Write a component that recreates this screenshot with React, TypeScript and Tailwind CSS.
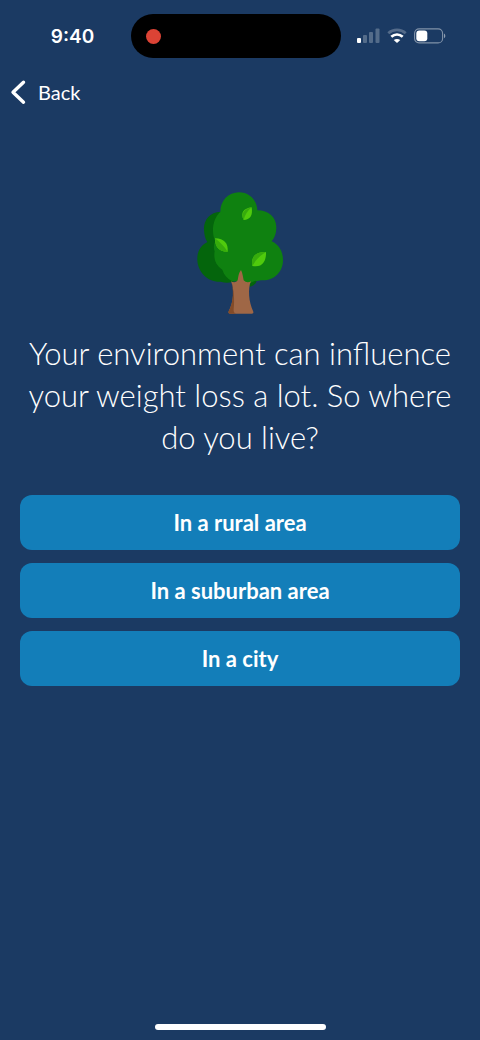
import React from 'react';

const options = ['In a rural area', 'In a suburban area', 'In a city'];

const SignalIcon: React.FC = () => (
  <svg className="w-[23px] h-4" viewBox="0 0 23 16" fill="#fff" aria-hidden="true">
    <rect x="0" y="10" width="4" height="5" rx="1" />
    <g opacity="0.25">
      <rect x="6" y="7" width="4" height="8" rx="1" />
      <rect x="12" y="4" width="4" height="11" rx="1" />
      <rect x="18.500" y="0.500" width="4" height="14.500" rx="1" />
    </g>
  </svg>
);

const WifiIcon: React.FC = () => (
  <svg className="w-5 h-4" viewBox="0 0 20 16" fill="none" stroke="#fff" strokeWidth="2.800" aria-hidden="true">
    <path d="M1.300 5.300C6.200 0.800 13.800 0.800 18.700 5.300" opacity="0.25" />
    <path d="M4.300 8.800C7.700 5.900 12.300 5.900 15.700 8.800" />
    <path d="M10 15L6.700 12C8.700 10.500 11.300 10.500 13.300 12Z" fill="#fff" stroke="none" />
  </svg>
);

const BatteryIcon: React.FC = () => (
  <svg className="w-8 h-4" viewBox="0 0 32 16" fill="none" aria-hidden="true">
    <rect x="0.600" y="0.900" width="28" height="14" rx="4.500" stroke="#fff" strokeOpacity="0.45" strokeWidth="1.100" />
    <rect x="2.300" y="2.600" width="11" height="10.600" rx="3" fill="#fff" />
    <path d="M30 5.500C31.800 6.300 31.800 9.500 30 10.300Z" fill="#fff" fillOpacity="0.5" />
  </svg>
);

const TreeIcon: React.FC = () => (
  <svg className="w-[87px] h-[124px]" viewBox="51 33 261 372" role="img" aria-label="Tree">
    {/* shaded side of the crown */}
    <path d="M122 95C88 96 70 122 72 150C73 166 76 178 82 186C62 196 51 214 52 239C53 277 84 307 122 305C140 311 158 308 170 300L229 300L170 180Z" fill="#04650c" />
    <path d="M200 300L230 302C228 311 222 317 210 320Z" fill="#04650c" />
    {/* lit side of the crown */}
    <path d="M121 95C121 62 145 37 177 37C208 37 231 60 232 91C266 91 289 112 289 143C289 160 284 173 275 184C296 193 309 214 309 240C309 275 284 301 249 301C239 301 233 304 226 302L210 309L155 303C142 296 132 285 127 269C108 256 100 239 104 214C100 203 101 193 106 184C94 160 96 118 121 95Z" fill="#0f8110" />
    {/* trunk */}
    <path d="M153 304C160 308 169 308 173 301C175 290 176 278 183 270C188 280 189 291 191 301C197 308 206 308 213 304C203 324 206 367 220 395C221 398 219 401 215 401H151C146 401 144 398 146 394C162 366 163 325 153 304Z" fill="#9f6746" />
    <path d="M153 304C161 325 162 366 146 394C144 398 146 401 151 401H168C162 398 160 394 161 386C164 366 162 325 153 304Z" fill="#834b28" />
    {/* leaves */}
    <path d="M215 82C191 85 180 99 191 120C210 119 219 108 215 82Z" fill="#50cb0d" />
    <path d="M215 82C194 88 181 99 191 120C195 105 202 92 215 82Z" fill="#37ac0d" />
    <path d="M105 175C133 176 145 190 143 215C119 216 105 203 105 175Z" fill="#50cb0d" />
    <path d="M105 175C121 187 132 199 143 215C119 216 105 203 105 175Z" fill="#37ac0d" />
    <path d="M258 216C227 215 212 230 217 258C247 264 259 244 258 216Z" fill="#50cb0d" />
    <path d="M258 216C227 215 212 230 217 258C227 240 239 227 258 216Z" fill="#37ac0d" />
  </svg>
);

const StatusBar: React.FC = () => (
  <div className="flex items-center pt-[14px]">
    <div className="flex-1 pt-[2px] pl-[14px] text-center font-['Inter','Liberation_Sans',sans-serif] text-[19px] leading-6 font-semibold">9:40</div>
    <div className="flex h-11 w-[210px] items-center rounded-full bg-black px-[15px]">
      <span className="h-[15px] w-[15px] rounded-full bg-[#dc4335]" />
    </div>
    <div className="flex flex-1 items-center gap-[7px] pr-[6px] pl-4">
      <SignalIcon />
      <WifiIcon />
      <BatteryIcon />
    </div>
  </div>
);

export default function App() {
  return (
    <div className="flex min-h-screen flex-col bg-[#1b3a63] font-['Lato','Liberation_Sans',sans-serif] text-white">
      <StatusBar />

      <header className="flex pt-5 pl-[10px]">
        <button type="button" className="flex items-center gap-3 text-xl leading-7">
          <svg className="h-7 w-4" viewBox="0 0 16 28" fill="none" stroke="#fff" strokeWidth="3.400" strokeLinecap="round" strokeLinejoin="round" aria-hidden="true">
            <path d="M13.500 4.200L3 14.200L13.500 24.200" />
          </svg>
          Back
        </button>
      </header>

      <main className="flex flex-1 flex-col px-5 pt-[85px]">
        <div className="flex justify-center">
          <TreeIcon />
        </div>
        <h1 className="mt-[17px] text-center text-[31px] leading-[42px] font-light">
          Your environment can influence your weight loss a lot. So where do you live?
        </h1>
        <div className="mt-[37px] flex flex-col gap-[13px]">
          {options.map(option => (
            <button key={option} type="button" className="h-[55px] rounded-xl bg-[#137eb9] text-[22px] font-bold">
              {option}
            </button>
          ))}
        </div>
      </main>

      <footer className="flex justify-center pb-[10px]">
        <div className="h-[6px] w-[171px] rounded-full bg-white" />
      </footer>
    </div>
  );
}
